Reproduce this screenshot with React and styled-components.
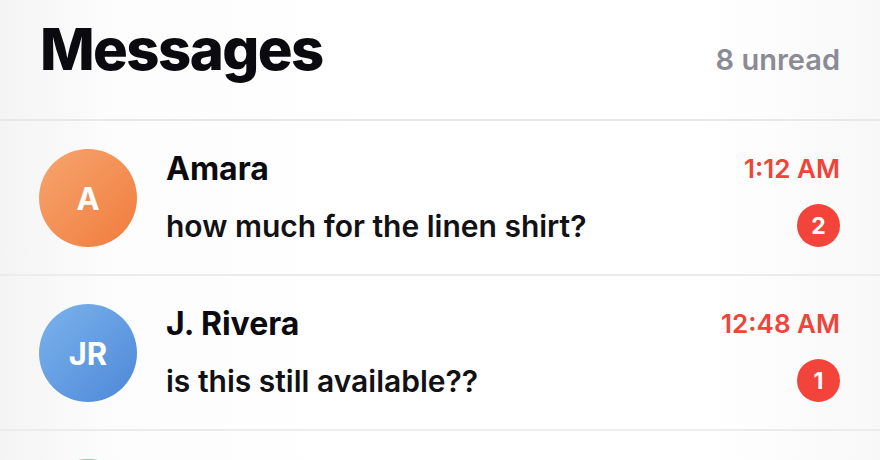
import React from "react"
import styled, { createGlobalStyle } from "styled-components"

const Global = createGlobalStyle`
  html, body {
    margin: 0;
    padding: 0;
    background: #fff;
    font-family: Inter, "Noto Sans", sans-serif;
    -webkit-font-smoothing: antialiased;
  }
  #root {
    width: 880px;
    height: 460px;
    overflow: hidden;
  }
`

const Screen = styled.div`
  width: 880px;
  background: linear-gradient(90deg, #f4f4f5 0%, #fcfcfc 12%, #fff 40%, #fff 80%, #f8f8f8 100%);
`

const Header = styled.header`
  display: flex;
  align-items: flex-start;
  justify-content: space-between;
  padding: 0 40px;
  border-bottom: 2px solid #e8e8ea;
  box-sizing: border-box;
  height: 121px;
`

const Title = styled.h1`
  margin: 0;
  padding-top: 14px;
  font-size: 58px;
  font-weight: 800;
  letter-spacing: -1.6px;
  line-height: 70px;
  color: #0b0b0f;
`

const Unread = styled.span`
  padding-top: 42px;
  font-size: 29px;
  font-weight: 600;
  line-height: 36px;
  color: #8b8b96;
`

const Row = styled.div`
  display: flex;
  align-items: center;
  gap: 29px;
  padding: 28px 40px 27px 39px;
  border-bottom: 2px solid #ececee;
`

const Avatar = styled.div`
  flex: none;
  width: 98px;
  height: 98px;
  border-radius: 50%;
  display: flex;
  align-items: center;
  justify-content: center;
  background: linear-gradient(135deg, ${p => p.from} 0%, ${p => p.to} 100%);
  color: #fff;
  font-size: 31px;
  font-weight: 700;
`

const Body = styled.div`
  flex: 1;
  display: flex;
  flex-direction: column;
  gap: 15px;
`

const Line = styled.div`
  display: flex;
  align-items: center;
  justify-content: space-between;
`

const Name = styled.span`
  font-size: 32px;
  font-weight: 650;
  line-height: 40px;
  color: #0b0b0f;
`

const Time = styled.span`
  font-size: 26px;
  font-weight: 600;
  line-height: 40px;
  color: #f04438;
`

const Preview = styled.span`
  font-size: 30px;
  font-weight: 600;
  line-height: 40px;
  color: #111116;
`

const Badge = styled.span`
  width: 43px;
  height: 43px;
  border-radius: 50%;
  background: #f2443a;
  color: #fff;
  display: flex;
  align-items: center;
  justify-content: center;
  font-size: 23px;
  font-weight: 700;
`

const chats = [
  { initials: "A", name: "Amara", time: "1:12 AM", text: "how much for the linen shirt?", unread: 2, from: "#f6a56f", to: "#f07c3c" },
  { initials: "JR", name: "J. Rivera", time: "12:48 AM", text: "is this still available??", unread: 1, from: "#7cb3ec", to: "#4d88d8" },
  { initials: "M", name: "Maya", time: "Yesterday", text: "thanks so much!", unread: 5, from: "#8ed3a8", to: "#62bf84" },
]

const App = () => (
  <>
    <Global />
    <Screen>
      <Header>
        <Title>Messages</Title>
        <Unread>8 unread</Unread>
      </Header>
      {chats.map(c => (
        <Row key={c.name}>
          <Avatar from={c.from} to={c.to}>{c.initials}</Avatar>
          <Body>
            <Line>
              <Name>{c.name}</Name>
              <Time>{c.time}</Time>
            </Line>
            <Line>
              <Preview>{c.text}</Preview>
              <Badge>{c.unread}</Badge>
            </Line>
          </Body>
        </Row>
      ))}
    </Screen>
  </>
)

export default App
